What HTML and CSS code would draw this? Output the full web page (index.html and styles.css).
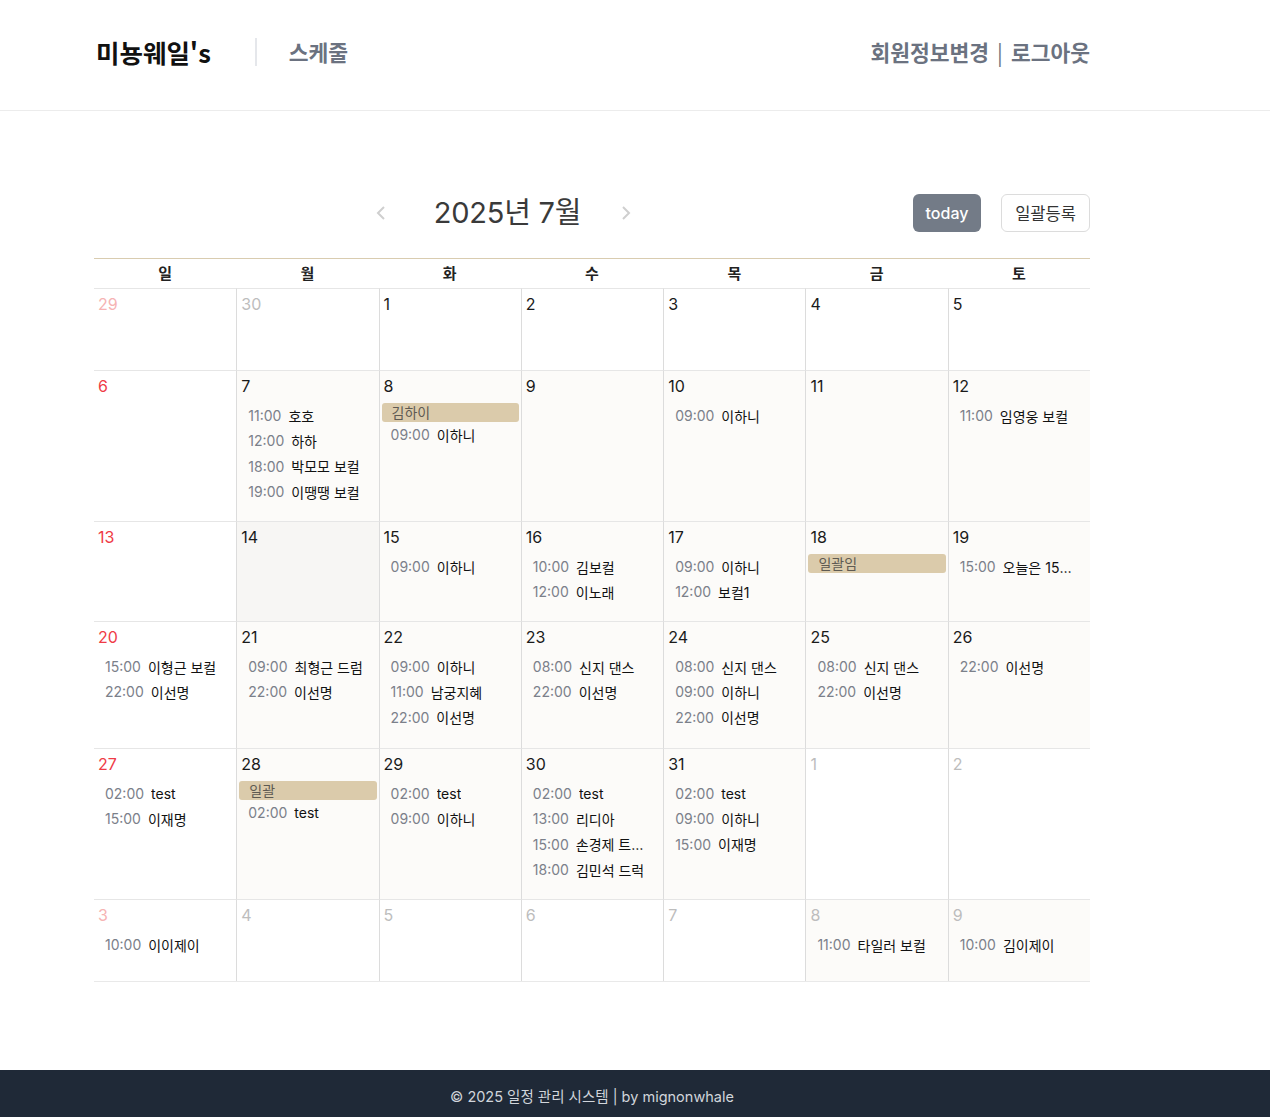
FILE: index.html
```html
<!DOCTYPE html>
<html lang="ko">
<head>
<meta charset="utf-8">
<title>미뇽웨일's 스케줄</title>
<link rel="stylesheet" href="styles.css">
</head>
<body>
<header class="site-header">
  <div class="header-inner">
    <div class="brand">
      <span class="logo">미뇽웨일's</span>
      <span class="vdivider"></span>
      <a class="nav-link">스케줄</a>
    </div>
    <nav class="user-nav">
      <a>회원정보변경</a><span class="sep">|</span><a>로그아웃</a>
    </nav>
  </div>
</header>

<main class="main">
  <div class="toolbar">
    <div class="tb-chunk"></div>
    <div class="tb-chunk tb-center">
      <button class="nav-btn" aria-label="prev"><svg width="10" height="16" viewBox="0 0 10 16"><polyline points="8,2 2,8 8,14" fill="none" stroke="#cfcfcf" stroke-width="2"/></svg></button>
      <h2 class="title">2025년 7월</h2>
      <button class="nav-btn" aria-label="next"><svg width="10" height="16" viewBox="0 0 10 16"><polyline points="2,2 8,8 2,14" fill="none" stroke="#cfcfcf" stroke-width="2"/></svg></button>
    </div>
    <div class="tb-chunk tb-right">
      <button class="btn-today">today</button>
      <button class="btn-bulk">일괄등록</button>
    </div>
  </div>

  <div class="dow">
    <div>일</div><div>월</div><div>화</div><div>수</div><div>목</div><div>금</div><div>토</div>
  </div>

  <div class="grid">
    <!-- row 1 -->
    <div class="cell sun other"><div class="num">29</div></div>
    <div class="cell other"><div class="num">30</div></div>
    <div class="cell"><div class="num">1</div></div>
    <div class="cell"><div class="num">2</div></div>
    <div class="cell"><div class="num">3</div></div>
    <div class="cell"><div class="num">4</div></div>
    <div class="cell"><div class="num">5</div></div>

    <!-- row 2 -->
    <div class="cell sun"><div class="num">6</div></div>
    <div class="cell tint"><div class="num">7</div><div class="evs">
      <div class="ev"><span class="t">11:00</span><span class="n">호호</span></div>
      <div class="ev"><span class="t">12:00</span><span class="n">하하</span></div>
      <div class="ev"><span class="t">18:00</span><span class="n">박모모 보컬</span></div>
      <div class="ev"><span class="t">19:00</span><span class="n">이땡땡 보컬</span></div>
    </div></div>
    <div class="cell tint"><div class="num">8</div><div class="evs">
      <div class="bar">김하이</div>
      <div class="ev"><span class="t">09:00</span><span class="n">이하니</span></div>
    </div></div>
    <div class="cell tint"><div class="num">9</div></div>
    <div class="cell tint"><div class="num">10</div><div class="evs">
      <div class="ev"><span class="t">09:00</span><span class="n">이하니</span></div>
    </div></div>
    <div class="cell tint"><div class="num">11</div></div>
    <div class="cell tint"><div class="num">12</div><div class="evs">
      <div class="ev"><span class="t">11:00</span><span class="n">임영웅 보컬</span></div>
    </div></div>

    <!-- row 3 -->
    <div class="cell sun"><div class="num">13</div></div>
    <div class="cell today"><div class="num">14</div></div>
    <div class="cell tint"><div class="num">15</div><div class="evs">
      <div class="ev"><span class="t">09:00</span><span class="n">이하니</span></div>
    </div></div>
    <div class="cell tint"><div class="num">16</div><div class="evs">
      <div class="ev"><span class="t">10:00</span><span class="n">김보컬</span></div>
      <div class="ev"><span class="t">12:00</span><span class="n">이노래</span></div>
    </div></div>
    <div class="cell tint"><div class="num">17</div><div class="evs">
      <div class="ev"><span class="t">09:00</span><span class="n">이하니</span></div>
      <div class="ev"><span class="t">12:00</span><span class="n">보컬1</span></div>
    </div></div>
    <div class="cell tint"><div class="num">18</div><div class="evs">
      <div class="bar">일괄임</div>
    </div></div>
    <div class="cell tint"><div class="num">19</div><div class="evs">
      <div class="ev"><span class="t">15:00</span><span class="n">오늘은 15시 레슨</span></div>
    </div></div>

    <!-- row 4 -->
    <div class="cell sun"><div class="num">20</div><div class="evs">
      <div class="ev"><span class="t">15:00</span><span class="n">이형근 보컬</span></div>
      <div class="ev"><span class="t">22:00</span><span class="n">이선명</span></div>
    </div></div>
    <div class="cell tint"><div class="num">21</div><div class="evs">
      <div class="ev"><span class="t">09:00</span><span class="n">최형근 드럼</span></div>
      <div class="ev"><span class="t">22:00</span><span class="n">이선명</span></div>
    </div></div>
    <div class="cell tint"><div class="num">22</div><div class="evs">
      <div class="ev"><span class="t">09:00</span><span class="n">이하니</span></div>
      <div class="ev"><span class="t">11:00</span><span class="n">남궁지혜</span></div>
      <div class="ev"><span class="t">22:00</span><span class="n">이선명</span></div>
    </div></div>
    <div class="cell tint"><div class="num">23</div><div class="evs">
      <div class="ev"><span class="t">08:00</span><span class="n">신지 댄스</span></div>
      <div class="ev"><span class="t">22:00</span><span class="n">이선명</span></div>
    </div></div>
    <div class="cell tint"><div class="num">24</div><div class="evs">
      <div class="ev"><span class="t">08:00</span><span class="n">신지 댄스</span></div>
      <div class="ev"><span class="t">09:00</span><span class="n">이하니</span></div>
      <div class="ev"><span class="t">22:00</span><span class="n">이선명</span></div>
    </div></div>
    <div class="cell tint"><div class="num">25</div><div class="evs">
      <div class="ev"><span class="t">08:00</span><span class="n">신지 댄스</span></div>
      <div class="ev"><span class="t">22:00</span><span class="n">이선명</span></div>
    </div></div>
    <div class="cell tint"><div class="num">26</div><div class="evs">
      <div class="ev"><span class="t">22:00</span><span class="n">이선명</span></div>
    </div></div>

    <!-- row 5 -->
    <div class="cell sun"><div class="num">27</div><div class="evs">
      <div class="ev"><span class="t">02:00</span><span class="n">test</span></div>
      <div class="ev"><span class="t">15:00</span><span class="n">이재명</span></div>
    </div></div>
    <div class="cell tint"><div class="num">28</div><div class="evs">
      <div class="bar">일괄</div>
      <div class="ev"><span class="t">02:00</span><span class="n">test</span></div>
    </div></div>
    <div class="cell tint"><div class="num">29</div><div class="evs">
      <div class="ev"><span class="t">02:00</span><span class="n">test</span></div>
      <div class="ev"><span class="t">09:00</span><span class="n">이하니</span></div>
    </div></div>
    <div class="cell tint"><div class="num">30</div><div class="evs">
      <div class="ev"><span class="t">02:00</span><span class="n">test</span></div>
      <div class="ev"><span class="t">13:00</span><span class="n">리디아</span></div>
      <div class="ev"><span class="t">15:00</span><span class="n">손경제 트럼펫</span></div>
      <div class="ev"><span class="t">18:00</span><span class="n">김민석 드럭</span></div>
    </div></div>
    <div class="cell tint"><div class="num">31</div><div class="evs">
      <div class="ev"><span class="t">02:00</span><span class="n">test</span></div>
      <div class="ev"><span class="t">09:00</span><span class="n">이하니</span></div>
      <div class="ev"><span class="t">15:00</span><span class="n">이재명</span></div>
    </div></div>
    <div class="cell other"><div class="num">1</div></div>
    <div class="cell other"><div class="num">2</div></div>

    <!-- row 6 -->
    <div class="cell sun other"><div class="num">3</div><div class="evs">
      <div class="ev"><span class="t">10:00</span><span class="n">이이제이</span></div>
    </div></div>
    <div class="cell other"><div class="num">4</div></div>
    <div class="cell other"><div class="num">5</div></div>
    <div class="cell other"><div class="num">6</div></div>
    <div class="cell other"><div class="num">7</div></div>
    <div class="cell other tint"><div class="num">8</div><div class="evs">
      <div class="ev"><span class="t">11:00</span><span class="n">타일러 보컬</span></div>
    </div></div>
    <div class="cell other tint"><div class="num">9</div><div class="evs">
      <div class="ev"><span class="t">10:00</span><span class="n">김이제이</span></div>
    </div></div>
  </div>
</main>

<footer class="site-footer">
  <div class="footer-inner">© 2025 일정 관리 시스템 | by mignonwhale</div>
</footer>
</body>
</html>
```
FILE: styles.css
```css
* { box-sizing: border-box; }

html, body { margin: 0; padding: 0; }

body {
  font-family: Inter, "Noto Sans CJK KR", "Noto Sans", sans-serif;
  color: #111;
  background: #fff;
  min-height: 100vh;
  display: flex;
  flex-direction: column;
}

/* header */
.site-header {
  height: 111px;
  border-bottom: 1px solid #ececec;
}
.header-inner {
  width: 996px;
  margin-left: 94px;
  height: 110px;
  padding: 0 0 7px 2px;
  display: flex;
  align-items: center;
  justify-content: space-between;
}
.brand {
  display: flex;
  align-items: center;
}
.logo {
  font-family: "Noto Sans CJK KR", sans-serif;
  font-weight: 700;
  font-size: 25.5px;
  color: #111;
}
.vdivider {
  width: 2px;
  height: 28px;
  background: #e5e7eb;
  margin: 0 32px 0 44px;
}
.nav-link {
  font-family: "Noto Sans CJK KR", sans-serif;
  font-size: 21.5px;
  font-weight: 600;
  color: #6b7280;
}
.user-nav {
  font-family: "Noto Sans CJK KR", sans-serif;
  font-size: 21.5px;
  font-weight: 700;
  color: #6b7280;
  display: flex;
  align-items: center;
}
.user-nav .sep {
  font-weight: 400;
  margin: 0 8px;
}

/* main calendar */
.main {
  width: 996px;
  margin-left: 94px;
  padding-top: 83px;
  flex: 1;
}
.toolbar {
  display: flex;
  justify-content: space-between;
  align-items: center;
  height: 38px;
  margin-bottom: 26px;
}
.tb-center {
  display: flex;
  align-items: center;
}
.nav-btn {
  width: 26px;
  height: 38px;
  border: 0;
  background: none;
  padding: 0;
  display: flex;
  align-items: center;
  justify-content: center;
}
.title {
  margin: 0 32px 0 40px;
  font-size: 29px;
  font-weight: 400;
  color: #3a3a3a;
  letter-spacing: -0.2px;
  line-height: 38px;
}
.tb-right {
  display: flex;
  gap: 20px;
}
.btn-today {
  width: 68px;
  height: 38px;
  border: 0;
  border-radius: 6px;
  background: #737b87;
  color: #fff;
  font-family: Inter, sans-serif;
  font-size: 16px;
  font-weight: 500;
}
.btn-bulk {
  width: 89px;
  height: 38px;
  border: 1px solid #dcdcdc;
  border-radius: 6px;
  background: #fff;
  color: #333;
  font-family: "Noto Sans CJK KR", sans-serif;
  font-size: 16.5px;
}

.dow {
  display: grid;
  grid-template-columns: repeat(7, 1fr);
  border-top: 1px solid #d9ccb0;
  height: 30px;
}
.dow div {
  text-align: center;
  font-family: "Noto Sans CJK KR", sans-serif;
  font-weight: 700;
  font-size: 15px;
  line-height: 27px;
  color: #222;
}

.grid {
  display: grid;
  grid-template-columns: repeat(7, 1fr);
  grid-template-rows: 82px 151px 100px 127px 151px 82px;
  border-bottom: 1px solid #e9e9e9;
}
.cell {
  border-top: 1px solid #e6e6e6;
  border-left: 1px solid #dcdcdc;
  padding: 5px 0 0;
  background: #fff;
  min-width: 0;
}
.cell:nth-child(7n+1) { border-left: 0; }
.cell.tint { background: #fcfbf9; }
.cell.today { background: #f7f6f4; }

.num {
  padding: 0 4px;
  font-size: 16px;
  line-height: 20px;
  color: #1a1a1a;
}
.sun .num { color: #ef3b46; }
.other .num { color: #bdbdbd; }
.sun.other .num { color: #f6b3b3; }

.evs {
  margin-top: 7px;
  padding: 0 2px;
}
.ev {
  display: flex;
  align-items: center;
  height: 25.33px;
  padding: 0 8px 0 9px;
  font-size: 14px;
  white-space: nowrap;
}
.ev .t {
  color: #7b808a;
  margin-right: 7px;
  flex: none;
}
.ev .n {
  color: #111;
  font-family: Inter, "Noto Sans CJK KR", sans-serif;
  overflow: hidden;
  text-overflow: ellipsis;
  min-width: 0;
}
.bar {
  height: 19px;
  line-height: 19px;
  margin: 3px 0 0;
  background: #dbcbab;
  border-radius: 3px;
  padding-left: 10px;
  font-family: "Noto Sans CJK KR", sans-serif;
  font-size: 14px;
  color: #5e5a52;
  white-space: nowrap;
  overflow: hidden;
}

/* footer */
.site-footer {
  height: 47px;
  background: #1f2937;
  color: #d1d5db;
  font-size: 14.5px;
}
.footer-inner {
  width: 996px;
  margin-left: 94px;
  height: 47px;
  display: flex;
  align-items: center;
  justify-content: center;
  padding-top: 4px;
}
```
